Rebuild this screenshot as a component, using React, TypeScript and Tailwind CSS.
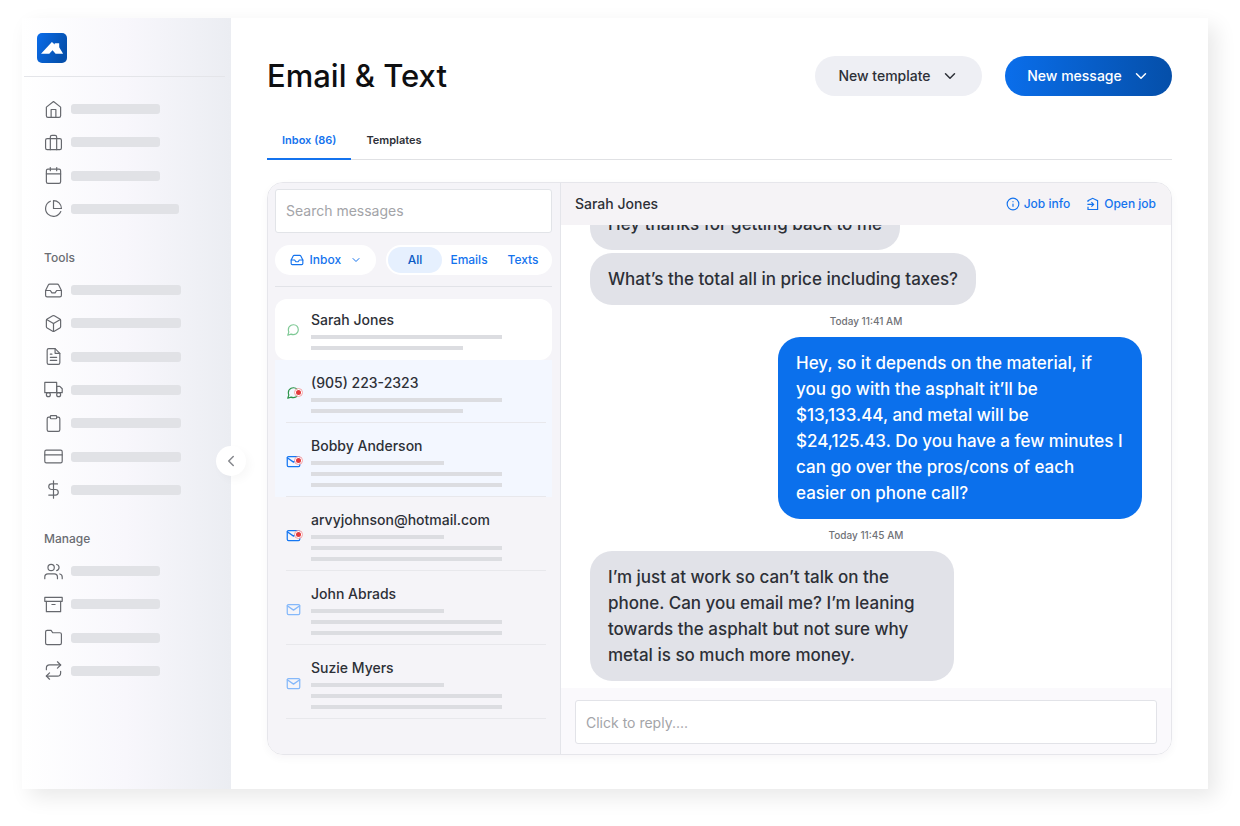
import { useState } from "react";
import type { IconType } from "react-icons";
import {
  FiArchive,
  FiBox,
  FiBriefcase,
  FiCalendar,
  FiChevronDown,
  FiChevronLeft,
  FiClipboard,
  FiCreditCard,
  FiDollarSign,
  FiFileText,
  FiFolder,
  FiHome,
  FiInbox,
  FiInfo,
  FiMail,
  FiMessageCircle,
  FiPieChart,
  FiRepeat,
  FiTruck,
  FiUsers,
} from "react-icons/fi";

type Filter = "All" | "Emails" | "Texts";

interface NavItem {
  name: string;
  icon: IconType;
  bar: string;
}

interface Conversation {
  name: string;
  kind: "text" | "email";
  unread: boolean;
  lines: string[];
  tone: "selected" | "new" | "plain";
}

const mainNav: NavItem[] = [
  { name: "Home", icon: FiHome, bar: "w-[89px]" },
  { name: "Jobs", icon: FiBriefcase, bar: "w-[89px]" },
  { name: "Calendar", icon: FiCalendar, bar: "w-[89px]" },
  { name: "Reports", icon: FiPieChart, bar: "w-[108px]" },
];

const toolsNav: NavItem[] = [
  { name: "Inbox", icon: FiInbox, bar: "w-[110px]" },
  { name: "Materials", icon: FiBox, bar: "w-[110px]" },
  { name: "Documents", icon: FiFileText, bar: "w-[110px]" },
  { name: "Deliveries", icon: FiTruck, bar: "w-[110px]" },
  { name: "Work orders", icon: FiClipboard, bar: "w-[110px]" },
  { name: "Payments", icon: FiCreditCard, bar: "w-[110px]" },
  { name: "Financials", icon: FiDollarSign, bar: "w-[110px]" },
];

const manageNav: NavItem[] = [
  { name: "Team", icon: FiUsers, bar: "w-[89px]" },
  { name: "Archive", icon: FiArchive, bar: "w-[89px]" },
  { name: "Files", icon: FiFolder, bar: "w-[89px]" },
  { name: "Automations", icon: FiRepeat, bar: "w-[89px]" },
];

const conversations: Conversation[] = [
  {
    name: "Sarah Jones",
    kind: "text",
    unread: false,
    lines: ["w-[191px]", "w-[152px]"],
    tone: "selected",
  },
  {
    name: "(905) 223-2323",
    kind: "text",
    unread: true,
    lines: ["w-[191px]", "w-[152px]"],
    tone: "new",
  },
  {
    name: "Bobby Anderson",
    kind: "email",
    unread: true,
    lines: ["w-[133px]", "w-[191px]", "w-[191px]"],
    tone: "new",
  },
  {
    name: "arvyjohnson@hotmail.com",
    kind: "email",
    unread: true,
    lines: ["w-[133px]", "w-[191px]", "w-[191px]"],
    tone: "plain",
  },
  {
    name: "John Abrads",
    kind: "email",
    unread: false,
    lines: ["w-[133px]", "w-[191px]", "w-[191px]"],
    tone: "plain",
  },
  {
    name: "Suzie Myers",
    kind: "email",
    unread: false,
    lines: ["w-[133px]", "w-[191px]", "w-[191px]"],
    tone: "plain",
  },
];

const Logo = () => (
  <svg viewBox="0 0 30 30" className="size-[30px]" aria-hidden="true">
    <defs>
      <linearGradient id="logo-fill" x1="0" y1="0" x2="1" y2="0.4">
        <stop offset="0" stopColor="#0a6cea" />
        <stop offset="1" stopColor="#0550ad" />
      </linearGradient>
    </defs>
    <rect width="30" height="30" rx="5" fill="url(#logo-fill)" />
    <path
      d="M4 20.7 14.9 9l2.8 2.6v-1.3h4.5v4l3.9 6.4h-7.5l-3.1-3.4-3.2 3.4z"
      fill="#fff"
    />
  </svg>
);

const OpenJobIcon = () => (
  <svg
    viewBox="0 0 14 14"
    className="size-[14px]"
    fill="none"
    stroke="currentColor"
    strokeWidth="1.2"
    aria-hidden="true"
  >
    <path d="M2 5V3.6L6.7 1.3l4.9 2.3v8.9H2v-2.7M1.4 7.4h6M5.4 5.2l2.2 2.2-2.2 2.2" />
  </svg>
);

const NavList = ({ items, height }: { items: NavItem[]; height: string }) => (
  <ul className={`flex flex-col justify-between ${height}`}>
    {items.map(({ name, icon: Icon, bar }) => (
      <li key={name}>
        <a
          href="#"
          aria-label={name}
          className="flex h-5 items-center gap-2 pl-[22px]"
        >
          <Icon className="size-[19px] shrink-0 stroke-[1.5] text-[#66686e]" />
          <span className={`h-[10px] rounded-[3px] bg-[#e1e2e6] ${bar}`} />
        </a>
      </li>
    ))}
  </ul>
);

const Sidebar = () => (
  <aside className="relative w-[209px] shrink-0 bg-linear-to-r from-white via-[#f8f7fc] to-[#ebedf2]">
    <div className="mr-1.5 ml-0.5 h-[59px] border-b border-[#e4e5e9] pt-[15px] pl-[13px]">
      <Logo />
    </div>
    <nav className="pt-[22px]">
      <NavList items={mainNav} height="h-[120px]" />
      <h2 className="mt-[29px] mb-3 pl-[22px] text-xs/5 font-medium text-[#6a6c72]">
        Tools
      </h2>
      <NavList items={toolsNav} height="h-[220px]" />
      <h2 className="mt-[29px] mb-3 pl-[22px] text-xs/5 font-medium text-[#6a6c72]">
        Manage
      </h2>
      <NavList items={manageNav} height="h-[120px]" />
    </nav>
    {/* Collapse handle sits over the sidebar edge */}
    <button
      aria-label="Collapse sidebar"
      className="absolute top-[428px] -right-[15px] flex size-[30px] items-center justify-center rounded-full bg-white text-[#85878c] shadow-[4px_4px_10px_rgba(0,0,0,0.03)]"
    >
      <FiChevronLeft className="size-[18px]" />
    </button>
  </aside>
);

const ConversationIcon = ({ kind, unread }: Pick<Conversation, "kind" | "unread">) => (
  <span className="relative flex w-[15px] shrink-0 justify-start">
    {kind === "text" ? (
      <FiMessageCircle
        className={`size-[14px] ${unread ? "text-[#2b9348]" : "text-[#7fc996]"}`}
      />
    ) : (
      <FiMail
        className={`size-[15px] ${unread ? "text-[#1677f2]" : "text-[#85b8fa]"}`}
      />
    )}
    {unread && (
      <span className="absolute top-1 right-0 size-[5px] rounded-full bg-[#e5393c] ring-1 ring-white outline outline-offset-1 outline-[#f6a5a8]" />
    )}
  </span>
);

const ConversationRow = ({ conversation }: { conversation: Conversation }) => {
  const { name, kind, unread, lines, tone } = conversation;
  const selected = tone === "selected";

  return (
    <li
      className={`pr-1.5 pl-[11px] ${
        selected ? "rounded-xl bg-white" : tone === "new" ? "bg-[#f3f7ff]" : ""
      }`}
    >
      <a
        href="#"
        className={`flex items-center gap-[10px] ${
          selected ? "pt-[11px] pb-[10px]" : "border-b border-[#e8e8ec] pt-[13px] pb-[9px]"
        }`}
      >
        <ConversationIcon kind={kind} unread={unread} />
        <span className="min-w-0">
          <span className="mb-[5px] block text-sm/5 font-medium text-[#2d3037]">
            {name}
          </span>
          <span className="flex flex-col gap-[7px]">
            {lines.map((width, i) => (
              <span key={i} className={`h-1 bg-[#dcdde1] ${width}`} />
            ))}
          </span>
        </span>
      </a>
    </li>
  );
};

const Bubble = ({ text, own, wide }: { text: string; own?: boolean; wide?: boolean }) => (
  <p
    className={`shrink-0 rounded-[22px] py-[13px] pl-[18px] text-[17px]/[26px] font-medium whitespace-pre-line ${
      wide ? "max-w-full pr-[18px]" : "w-[364px] pr-3"
    } ${own ? "self-end bg-[#0b70ec] text-white" : "self-start bg-[#e1e2e8] text-[#2d3037]"}`}
  >
    {text}
  </p>
);

const Timestamp = ({ text }: { text: string }) => (
  <time className="shrink-0 text-center text-[10px]/8 font-medium text-[#707277]">
    {text}
  </time>
);

export default function App() {
  const [filter, setFilter] = useState<Filter>("All");

  return (
    <div className="min-h-screen bg-white pt-[18px] pr-8 pb-[37px] pl-[22px] font-['Inter',sans-serif]">
      <div className="flex bg-white shadow-[8px_8px_20px_rgba(0,0,0,0.09)]">
        <Sidebar />

        <main className="min-w-0 flex-1 px-9 pt-[38px] pb-[34px]">
          <header className="flex items-center justify-between">
            <h1 className="text-[31px]/10 font-medium text-[#0e0f11]">Email &amp; Text</h1>
            <div className="flex gap-[23px]">
              <button className="flex h-10 w-[167px] items-center justify-center gap-[10px] rounded-full bg-[#eeeff4] text-sm font-medium text-[#2d3037]">
                New template
                <FiChevronDown className="size-[18px]" />
              </button>
              <button className="flex h-10 w-[167px] items-center justify-center gap-[10px] rounded-full bg-linear-to-r from-[#0a6eeb] to-[#054fa9] text-sm font-medium text-white">
                New message
                <FiChevronDown className="size-[18px]" />
              </button>
            </div>
          </header>

          <nav className="mt-6 flex h-10 border-b border-[#e0e1e4] text-[11px] font-semibold">
            <a
              href="#"
              className="-mb-px flex items-center border-b-2 border-[#1473ee] px-[15px] pt-0.5 text-[#1473ee]"
            >
              Inbox (86)
            </a>
            <a href="#" className="flex items-center px-[15px] pt-0.5 text-[#2d3037]">
              Templates
            </a>
          </nav>

          <section className="mt-[22px] flex overflow-hidden rounded-2xl border border-[#e6e6eb] shadow-[0_3px_8px_rgba(40,20,80,0.04)]">
            {/* Conversation list */}
            <div className="w-[293px] shrink-0 border-r border-[#e4e5ea] bg-[#f5f4f8] pt-1.5 pr-2 pb-[35px] pl-[7px]">
              <input
                type="text"
                aria-label="Search messages"
                placeholder="Search messages"
                className="h-11 w-full rounded-[3px] border border-[#e2e4e8] bg-white px-[10px] pb-0.5 text-sm text-[#2d3037] placeholder:text-[#a3a4a8]"
              />

              <div className="mt-3 flex h-[30px] justify-between text-xs font-medium text-[#1473ee]">
                <label className="flex w-[101px] items-center justify-center gap-1.5 rounded-full bg-white">
                  <FiInbox className="size-[14px]" />
                  <select
                    aria-label="Folder"
                    className="w-[34px] appearance-none bg-transparent"
                  >
                    <option>Inbox</option>
                    <option>Sent</option>
                  </select>
                  <FiChevronDown className="size-3" />
                </label>
                <div className="flex w-[166px] rounded-full bg-white p-0.5">
                  {(["All", "Emails", "Texts"] as Filter[]).map((option) => (
                    <button
                      key={option}
                      onClick={() => setFilter(option)}
                      className={`flex-1 rounded-full ${
                        option === filter ? "bg-[#e6f0fe] text-[#0b5bc4]" : ""
                      }`}
                    >
                      {option}
                    </button>
                  ))}
                </div>
              </div>

              <ul className="mt-[11px] border-t border-[#e2e3e8] pt-3">
                {conversations.map((conversation) => (
                  <ConversationRow key={conversation.name} conversation={conversation} />
                ))}
              </ul>
            </div>

            {/* Open conversation */}
            <div className="flex min-w-0 flex-1 flex-col">
              <div className="flex h-[42px] shrink-0 items-center justify-between bg-[#f5f3f6] pr-[15px] pl-[14px]">
                <h2 className="text-sm font-medium text-[#2d3037]">Sarah Jones</h2>
                <div className="flex gap-4 text-xs font-medium text-[#1473ee]">
                  <a href="#" className="flex items-center gap-1">
                    <FiInfo className="size-[14px]" />
                    Job info
                  </a>
                  <a href="#" className="flex items-center gap-1">
                    <OpenJobIcon />
                    Open job
                  </a>
                </div>
              </div>

              {/* Newest message stays at the bottom, older ones run off the top */}
              <div className="flex h-0 min-h-0 grow basis-[0px] flex-col justify-end overflow-hidden px-[29px] pb-[7px]">
                <div className="flex shrink-0 flex-col gap-[3px]">
                  <Bubble wide text="Hey thanks for getting back to me" />
                  <Bubble wide text="What’s the total all in price including taxes?" />
                </div>
                <Timestamp text="Today 11:41 AM" />
                <Bubble
                  own
                  text={
                    "Hey, so it depends on the material, if\nyou go with the asphalt it’ll be\n$13,133.44, and metal will be\n$24,125.43. Do you have a few minutes I\ncan go over the pros/cons of each\neasier on phone call?"
                  }
                />
                <Timestamp text="Today 11:45 AM" />
                <Bubble text="I’m just at work so can’t talk on the phone. Can you email me? I’m leaning towards the asphalt but not sure why metal is so much more money." />
              </div>

              <div className="shrink-0 bg-[#faf9fc] pt-3 pr-[14px] pb-[10px] pl-[14px]">
                <input
                  type="text"
                  aria-label="Reply"
                  placeholder="Click to reply...."
                  className="h-11 w-full rounded-[3px] border border-[#e2e3e8] bg-white px-[10px] text-sm text-[#2d3037] placeholder:text-[#a3a4a8]"
                />
              </div>
            </div>
          </section>
        </main>
      </div>
    </div>
  );
}
